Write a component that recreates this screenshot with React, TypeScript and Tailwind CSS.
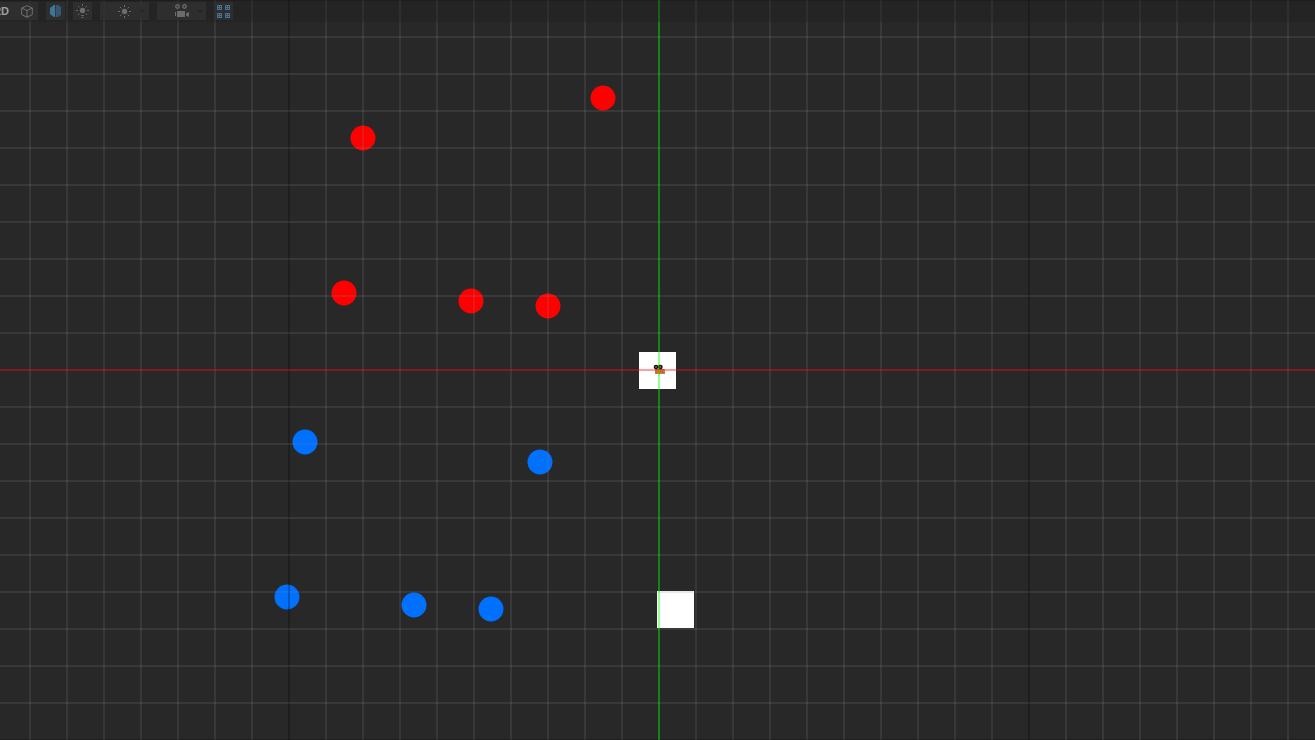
import React from "react";

type Dot = { x: number; y: number; tone: "red" | "blue" };

const dots: Dot[] = [
  { x: 603, y: 98, tone: "red" },
  { x: 363, y: 138, tone: "red" },
  { x: 344, y: 293, tone: "red" },
  { x: 471, y: 301, tone: "red" },
  { x: 548, y: 306, tone: "red" },
  { x: 305, y: 442, tone: "blue" },
  { x: 540, y: 462, tone: "blue" },
  { x: 287, y: 597, tone: "blue" },
  { x: 414, y: 605, tone: "blue" },
  { x: 491, y: 609, tone: "blue" },
];

const CELL = 37;
const ORIGIN = { x: 658, y: 369 };
const steps = Array.from({ length: 81 }, (_, i) => i - 40);
const lineClass = (n: number) => (n % 10 === 0 ? "fill-black/25" : "fill-[#878787]/18");

function Grid() {
  return (
    <svg className="pointer-events-none absolute inset-0 size-full" shapeRendering="crispEdges" aria-hidden="true">
      {steps.filter((n) => n !== 0).map((n) => (
        <React.Fragment key={n}>
          <rect x={ORIGIN.x + n * CELL} y="0" width="2" height="100%" className={lineClass(n)} />
          <rect x="0" y={ORIGIN.y + n * CELL} width="100%" height="2" className={lineClass(n)} />
        </React.Fragment>
      ))}
      <rect x="0" y={ORIGIN.y} width="100%" height="2" className="fill-[#ff0a0e]/40" />
      <rect x={ORIGIN.x} y="0" width="2" height="100%" className="fill-[#0f0]/42" />
    </svg>
  );
}

function CameraGizmo() {
  return (
    <svg className="absolute left-[653px] top-[364px] h-3 w-3" viewBox="0 0 12 12" aria-hidden="true">
      <rect x="2" y="5" width="10" height="5" fill="#d56a22" />
      <path d="M2 5h9v1H2z" fill="#d5402a" />
      <path d="M2 9.5h10M11.5 5v5" stroke="#b08060" />
      <circle cx="3" cy="3" r="2.3" fill="#15100c" />
      <circle cx="7.4" cy="3" r="2.3" fill="#15100c" />
      <circle cx="3" cy="3" r=".9" fill="#a9562a" />
      <circle cx="7.4" cy="3" r=".9" fill="#a9562a" />
      <path d="M5 0h2v12H5z" fill="#0f0" fillOpacity=".2" />
    </svg>
  );
}

function CubeIcon() {
  return (
    <svg width="12" height="13" viewBox="0 0 12 13" fill="none" stroke="#707070" aria-hidden="true">
      <path d="M6 .7 11.3 3v6.5L6 12.3.7 9.5V3zM.7 3 6 5.5 11.3 3M6 5.5v6.8" />
    </svg>
  );
}

function SplitIcon() {
  return (
    <svg width="11" height="12" viewBox="0 0 11 12" aria-hidden="true">
      <path d="M5 0v12H4L0 9V3l4-3z" fill="#3f7595" />
      <path d="M6 0h2l3 2v8l-3 2H6z" fill="#365870" />
      <path d="M5 0h1v12H5z" fill="#2c3b46" />
    </svg>
  );
}

function LampIcon() {
  return (
    <svg width="13" height="14" viewBox="0 0 13 14" aria-hidden="true">
      <circle cx="6.5" cy="6.5" r="2.7" fill="#6d6d6d" />
      <path d="M5 11.5h3M5.5 13.5h2M6.5 0v2M0 6.5h2M11 6.5h2M2 2l1.3 1.3M11 2 9.7 3.3M2 11l1.3-1.3M11 11 9.7 9.7" stroke="#656565" />
    </svg>
  );
}

function SunIcon() {
  return (
    <svg width="13" height="13" viewBox="0 0 13 13" aria-hidden="true">
      <circle cx="6.5" cy="6.5" r="2.7" fill="#6d6d6d" />
      <path d="M6.5 0v2M6.5 11v2M0 6.5h2M11 6.5h2M2 2l1.3 1.3M11 2 9.7 3.3M2 11l1.3-1.3M11 11 9.7 9.7" stroke="#6d6d6d" />
    </svg>
  );
}

function FilmIcon() {
  return (
    <svg width="14" height="14" viewBox="0 0 14 14" aria-hidden="true">
      <circle cx="2.5" cy="2.5" r="1.7" fill="none" stroke="#666" strokeWidth="1.5" />
      <circle cx="9.5" cy="2.5" r="1.7" fill="none" stroke="#666" strokeWidth="1.5" />
      <path d="M2 7h8v6H2zM0 8h1v4H0zM11 9.5 14 8v5l-3-1.5z" fill="#6b6b6b" />
    </svg>
  );
}

function TilesIcon() {
  return (
    <svg width="13" height="13" viewBox="0 0 13 13" shapeRendering="crispEdges" aria-hidden="true">
      {["0 0", "8 0", "0 8", "8 8"].map((p) => (
        <g key={p} transform={`translate(${p})`}>
          <path d="M0 0h5v5H0z" fill="#47728d" />
          <path d="M1 1h1v1H1zM3 1h1v1H3zM1 3h1v1H1zM3 3h1v1H3z" fill="#2b343a" />
        </g>
      ))}
    </svg>
  );
}

function Caret() {
  return (
    <svg width="6" height="3" viewBox="0 0 6 3" aria-hidden="true">
      <path d="M0 0h6L3 3z" fill="#252525" />
    </svg>
  );
}

const button = "flex h-[18px] items-center justify-center bg-[#303030]/85";

function Toolbar() {
  return (
    <header className="relative flex h-[22px] items-center gap-2 bg-[#1c1c1c]/35">
      <button className="flex h-[18px] w-[38px] items-center justify-between overflow-hidden bg-[#303030]/85 pr-[5px] font-['Liberation_Sans',sans-serif] text-[11px] font-bold text-[#a0a0a0]">
        <span className="-ml-[5px]">2D</span>
        <CubeIcon />
      </button>
      <button aria-label="Shading" className={`${button} w-[19px]`}><SplitIcon /></button>
      <button aria-label="Lighting" className={`${button} w-[19px]`}><LampIcon /></button>
      <button aria-label="Effects" className={`${button} w-[49px] gap-2 pl-3.5`}><SunIcon /><Caret /></button>
      <button aria-label="Camera" className={`${button} w-[49px] gap-2 pl-3.5`}><FilmIcon /><Caret /></button>
      <button aria-label="Gizmos" className={`${button} w-[19px]`}><TilesIcon /></button>
    </header>
  );
}

export default function App() {
  return (
    <main className="relative h-screen w-full overflow-hidden bg-[#282828]">
      {dots.map((d) => (
        <span
          key={`${d.x}-${d.y}`}
          className={`absolute size-[25px] -translate-x-1/2 -translate-y-1/2 rounded-full ${d.tone === "red" ? "bg-[#f00]" : "bg-[#0070ff]"}`}
          style={{ left: d.x, top: d.y }}
        />
      ))}
      <span className="absolute left-[639px] top-[352px] size-[37px] bg-white" />
      <span className="absolute left-[657px] top-[591px] size-[37px] bg-white" />
      <Grid />
      <CameraGizmo />
      <Toolbar />
    </main>
  );
}
